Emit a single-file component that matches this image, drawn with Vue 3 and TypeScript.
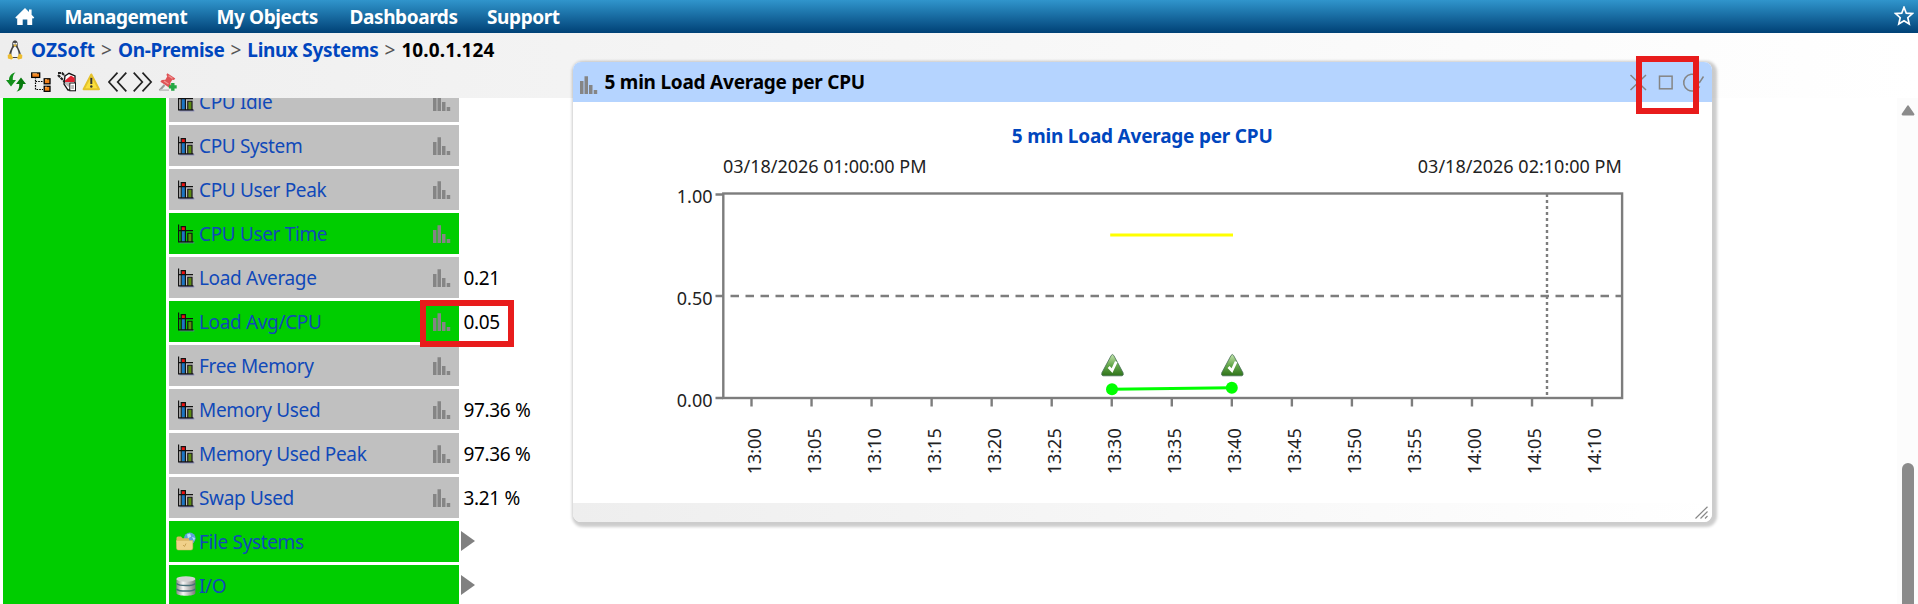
<script setup lang="ts">
interface Metric {
  label: string
  value?: string
  ok?: boolean
  kind: 'metric' | 'folder' | 'disk'
}

const menu: string[] = ['Management', 'My Objects', 'Dashboards', 'Support']
const crumbs: string[] = ['OZSoft', 'On-Premise', 'Linux Systems']

const rows: Metric[] = [
  { label: 'CPU Idle', kind: 'metric' },
  { label: 'CPU System', kind: 'metric' },
  { label: 'CPU User Peak', kind: 'metric' },
  { label: 'CPU User Time', kind: 'metric', ok: true },
  { label: 'Load Average', kind: 'metric', value: '0.21' },
  { label: 'Load Avg/CPU', kind: 'metric', value: '0.05', ok: true },
  { label: 'Free Memory', kind: 'metric' },
  { label: 'Memory Used', kind: 'metric', value: '97.36 %' },
  { label: 'Memory Used Peak', kind: 'metric', value: '97.36 %' },
  { label: 'Swap Used', kind: 'metric', value: '3.21 %' },
  { label: 'File Systems', kind: 'folder', ok: true },
  { label: 'I/O', kind: 'disk', ok: true },
]

const ticks = Array.from({ length: 15 }, (_, i) => {
  const minutes = 13 * 60 + i * 5
  return {
    x: 178.5 + i * 60.04,
    label: `${Math.floor(minutes / 60)}:${String(minutes % 60).padStart(2, '0')}`,
  }
})

const samples = [
  { x: 539, y: 287.2 },
  { x: 658.8, y: 285.7 },
]
</script>

<template>
  <div class="page">
    <nav class="menu">
      <svg class="home" width="20" height="18" viewBox="0 0 20 18">
        <path d="M10 0 L14 4.1 V1.6 H16.6 V6.7 L19.3 9.5 L18 10.8 L17.2 10 V17 H12.3 V11.5 H7.7 V17 H2.2 V10 L1.4 10.8 L.3 9.5 Z" fill="#fff" />
      </svg>
      <a v-for="item in menu" :key="item" class="menu-item">{{ item }}</a>
      <svg class="star" width="20" height="20" viewBox="0 0 20 20">
        <path d="M10 1.3 L12.3 7.2 L18.4 7.6 L13.8 11.7 L15.2 17.9 L10 14.8 L4.8 17.9 L6.2 11.7 L1.6 7.6 L7.7 7.2 Z" fill="none" stroke="#fff" stroke-width="1.7" />
      </svg>
    </nav>

    <header class="header">
      <div class="crumbs">
        <svg class="tux" width="16" height="20" viewBox="0 0 16 20">
          <path d="M8 .5 C5.4 .5 5.2 3 5.3 5.5 C5.3 7.5 2.2 11 2.3 15 L5 18 H11 L13.8 15 C13.8 11 10.7 8 10.7 5.5 C10.8 3 10.6 .5 8 .5Z" fill="#444" />
          <path d="M8 6 C6 7.5 3.8 12 4.4 17 H11.6 C12.2 12 10 7.5 8 6Z" fill="#f6f6f6" />
          <path d="M.7 15 L3.6 13.5 L6.2 18 L4.6 19.4 L.9 18.4Z M15.3 15 L12.4 13.5 L10 18 L11.4 19.4 L15.1 18.4Z M6.1 5 L8 4.2 L10 5 L8 6.7Z" fill="#edbd31" />
          <circle cx="7" cy="3.7" r=".9" fill="#fff" /><circle cx="9.2" cy="3.7" r=".9" fill="#fff" />
        </svg>
        <template v-for="crumb in crumbs" :key="crumb">
          <a class="crumb">{{ crumb }}</a><span class="sep">&gt;</span>
        </template>
        <span class="current">10.0.1.124</span>
      </div>
      <div class="tools">
        <svg width="20" height="20" viewBox="0 0 20 20">
          <path d="M9.5 .4 C6 1 3 3.5 3 8 H0 L5 14.4 L10 8 H6.8 C6.5 4.5 7.5 2 9.5 .4Z" fill="#12901a" />
          <path d="M10.5 19.6 C14 19 17 16.5 17 12 H20 L15 5.6 L10 12 H13.2 C13.5 15.5 12.5 18 10.5 19.6Z" fill="#077a0d" />
        </svg>
        <svg width="20" height="20" viewBox="0 0 20 20">
          <path d="M4.5 5 V17.5 H12 M4.5 9.5 H12" fill="none" stroke="#000" stroke-width="1.2" stroke-dasharray="1.6 1.1" />
          <g fill="#f0801a" stroke="#000" stroke-width="1.3"><rect x=".7" y="1" width="8" height="4.4" /><rect x="13.2" y="6.8" width="5.8" height="5" /><rect x="13.2" y="14.3" width="5.8" height="5" /></g>
          <path d="M1.5 1.8 H6 M14 7.8 H16 M14 15.2 H16" stroke="#ffb461" />
        </svg>
        <svg width="20" height="20" viewBox="0 0 20 20">
          <path d="M8 4 L12 1.3 L18 4 V18 H11 L7 12 Z" fill="#fff" stroke="#111" stroke-width="1.3" />
          <path d="M1 1 H5 L8 4 M1 3 L5 7 L10 12" fill="none" stroke="#222" stroke-width="2.2" stroke-dasharray="3 .8" />
          <path d="M8 8.5 L14 3.5 L17.6 6 V10 H8Z" fill="#e32031" />
          <path d="M8 10 H12 V15 L9 13Z" fill="#bbb" /><rect x="12.8" y="11" width="5.7" height="7.8" fill="#fff" stroke="#111" /><path d="M14.2 14 H17 M14.2 16 H17" stroke="#777" />
        </svg>
        <svg width="20" height="20" viewBox="0 0 20 20">
          <path d="M9.3 2.5 L17 17.2 H1.6 Z" fill="#fbe03d" stroke="#e5c22c" stroke-width="2" stroke-linejoin="round" />
          <path d="M9.3 5.8 V12" stroke="#333" stroke-width="2" /><circle cx="9.3" cy="14.5" r="1.2" fill="#333" />
        </svg>
        <svg width="20" height="20" viewBox="0 0 20 20"><path d="M9.5 .7 L.9 10 L9.5 19.3 M18.3 .7 L9.7 10 L18.3 19.3" fill="none" stroke="#222" stroke-width="1.7" /></svg>
        <svg width="20" height="20" viewBox="0 0 20 20"><path d="M.7 .7 L9.3 10 L.7 19.3 M9.5 .7 L18.1 10 L9.5 19.3" fill="none" stroke="#222" stroke-width="1.7" /></svg>
        <svg width="20" height="20" viewBox="0 0 20 20">
          <path d="M6.5 13 L1.5 18.5" stroke="#999" stroke-width="2" /><path d="M2.5 17.2 H11 V19 H1.5Z" fill="#c4c4c4" />
          <path d="M9.4 1.2 L17.3 6.4 L16 8 L14.3 7.8 L12.3 11 L13 14.6 L11 15.6 L2.4 9.8 L3.7 8 L7.4 7.8 L9.2 4.6 L8.4 2.8Z" fill="#df5356" />
          <path d="M10.5 3.8 L14.5 6.4 M6 9 L10.5 12" stroke="#f09593" stroke-width="1.3" />
          <path d="M14.8 11 V18.8 M10.9 14.9 H18.7" stroke="#24a744" stroke-width="3.4" />
        </svg>
      </div>
    </header>

    <main class="content">
      <div class="group"></div>
      <div class="rows">
        <div v-for="row in rows" :key="row.label" class="row">
          <div class="cell" :class="{ ok: row.ok }">
            <svg v-if="row.kind === 'metric'" class="row-icon" width="20" height="20" viewBox="0 0 20 20">
              <path d="M3.5 18.8 H18.3" stroke="#7074b5" stroke-width="1" />
              <rect x="5.6" y="3.6" width="3.8" height="14" fill="#1c75c4" />
              <rect x="5.6" y="3" width="3.8" height="3.4" fill="#f01010" />
              <rect x="12.2" y="9.6" width="3.6" height="8" fill="#5d8c10" />
              <path d="M2.6 .6 V17.8 H17.4 M2 6.6 H17 M5.2 17.6 V2.6 H9.4 V17.6 M11.8 17.6 V9.2 H16 V17.6" stroke="#111" stroke-width="1.15" fill="none" />
            </svg>
            <svg v-else-if="row.kind === 'folder'" class="row-icon" width="20" height="20" viewBox="0 0 20 20">
              <circle cx="13.8" cy="6.3" r="5.8" fill="#5da0d8" /><path d="M11 2.6 L14 1.5 L15.2 4.5 L12 6.5Z M16 5 L19 6 L18 9Z" fill="#b7dff7" />
              <path d="M.5 6 Q.5 4.5 2 4.5 H5 L6.5 6.2 H13 V10 H.5Z" fill="#dcb65e" />
              <path d="M.3 8.5 H16.8 V16 Q16.8 18 15 18 H2.3 Q.5 18 .5 16Z" fill="#f0d08a" stroke="#d4b063" stroke-width=".5" />
              <path d="M7 13 L8.5 14.5 L10 11.5" fill="none" stroke="#c9a254" />
            </svg>
            <svg v-else class="row-icon" width="20" height="20" viewBox="0 0 20 20">
              <defs><linearGradient id="steel"><stop offset="0" stop-color="#888" /><stop offset=".35" stop-color="#f8f8f8" /><stop offset="1" stop-color="#777" /></linearGradient></defs>
              <path d="M.4 3 V17 C.4 20.7 19.4 20.7 19.4 17 V3Z" fill="url(#steel)" />
              <ellipse cx="9.9" cy="3" rx="9.5" ry="2.7" fill="#d2d2d2" />
              <path d="M.4 7.4 C3 10.2 17 10.2 19.4 7.4 M.4 13 C3 15.8 17 15.8 19.4 13" fill="none" stroke="#477079" stroke-width="1.5" />
            </svg>
            <a class="label">{{ row.label }}</a>
            <svg v-if="row.kind === 'metric'" class="bars" width="18" height="18" viewBox="0 0 18 18"><path d="M0 5 h3.5 v13 h-3.5z M4.5 .3 h3.5 v17.7 h-3.5z M9 9 h3.5 v9 h-3.5z M13.7 14 h3.5 v4 h-3.5z" fill="#858585" /></svg>
          </div>
          <span v-if="row.value" class="value">{{ row.value }}</span>
          <svg v-else-if="row.kind !== 'metric'" class="expand" width="14" height="20" viewBox="0 0 14 20"><path d="M0 0 L14 10 L0 20Z" fill="#808080" /></svg>
        </div>
      </div>
      <div class="scrollbar">
        <svg width="14" height="11" viewBox="0 0 14 11"><path d="M7 1.5 L12.3 9.3 H1.7Z" fill="#8b8b8b" stroke="#8b8b8b" stroke-width="2.2" stroke-linejoin="round" /></svg>
        <div class="thumb"></div>
      </div>
    </main>

    <section class="dialog">
      <div class="dialog-head">
        <svg class="bars" width="18" height="18" viewBox="0 0 18 18"><path d="M0 5 h3.5 v13 h-3.5z M4.5 .3 h3.5 v17.7 h-3.5z M9 9 h3.5 v9 h-3.5z M13.7 14 h3.5 v4 h-3.5z" fill="#858585" /></svg>
        <span class="dialog-title">5 min Load Average per CPU</span>
        <svg class="controls" width="76" height="20" viewBox="0 0 76 20" fill="none" stroke="#858585" stroke-width="1.5">
          <path d="M1.5 2 L17 17 M17 2 L1.5 17" />
          <rect x="30.5" y="3.2" width="12.6" height="12.6" />
          <path d="M70.6 13.5 A8.4 8.4 0 1 1 68.5 3.2 M74.5 3.5 L70.6 9.5 L66.8 6.6" />
        </svg>
      </div>
      <svg class="chart" width="1139" height="401" viewBox="0 0 1139 401">
        <defs><linearGradient id="status" x1="0" y1="0" x2="0" y2="1"><stop offset="0" stop-color="#c5e3ad" /><stop offset=".5" stop-color="#66a94c" /><stop offset="1" stop-color="#2e7219" /></linearGradient></defs>
        <text class="chart-title" x="438.8" y="40.7" textLength="261">5 min Load Average per CPU</text>
        <g class="axis-text">
          <text x="150" y="71.3" textLength="203.5">03/18/2026 01:00:00 PM</text>
          <text x="1048.8" y="71.3" text-anchor="end" textLength="204">03/18/2026 02:10:00 PM</text>
          <text x="139.5" y="101.3" text-anchor="end">1.00</text>
          <text x="139.5" y="202.8" text-anchor="end">0.50</text>
          <text x="139.5" y="304.9" text-anchor="end">0.00</text>
          <text v-for="tick in ticks" :key="tick.label" :transform="`translate(${tick.x + 9} 372.3) rotate(-90)`">{{ tick.label }}</text>
        </g>
        <g class="axis">
          <rect x="150.3" y="91.5" width="898.8" height="204.5" />
          <path d="M142.5 92.5 H150 M142.5 296 H150" />
          <path v-for="tick in ticks" :key="tick.label" :d="`M${tick.x} 296 V304.5`" />
          <path d="M142.5 194 H1049" stroke-dasharray="8.5 6.5" />
          <path d="M974 92 V296" stroke-dasharray="3 3" />
        </g>
        <path d="M537.2 133 H660" stroke="#ffff00" stroke-width="3" />
        <path :d="`M${samples[0].x} ${samples[0].y} L${samples[1].x} ${samples[1].y}`" stroke="#00ff00" stroke-width="3" />
        <g v-for="sample in samples" :key="sample.x">
          <circle :cx="sample.x" :cy="sample.y" r="6" fill="#00ff00" />
          <g :transform="`translate(${sample.x + 0.5} 252)`">
            <path d="M-1.3 1.5 Q0 -.6 1.3 1.5 L10.6 18.8 Q11.4 21.4 9.6 21.8 H-9.6 Q-11.4 21.4 -10.6 18.8Z" fill="url(#status)" stroke="#456f56" stroke-width=".8" />
            <path d="M-3.8 13 L-.4 16.6 L3.8 7.6" fill="none" stroke="#fff" stroke-width="2.7" />
          </g>
        </g>
      </svg>
      <div class="dialog-foot">
        <svg width="14" height="14" viewBox="0 0 14 14" stroke="#888" stroke-width="1.2"><path d="M.5 12.5 L12.5 .7 M5.5 12.5 L12.5 5.5 M10 12.5 L12.5 10" /></svg>
      </div>
    </section>

    <div class="mark mark-value"></div>
    <div class="mark mark-window"></div>
  </div>
</template>

<style>
body { margin: 0; background: #fff; overflow: hidden; }
</style>

<style scoped>
.page { position: relative; width: 1918px; height: 604px; overflow: hidden; display: flex; flex-direction: column; font: 19px/26px "Noto Sans", "Open Sans", sans-serif; letter-spacing: -0.35px; }
.page svg { display: block; flex: none; }
.menu { flex: none; box-sizing: border-box; height: 33px; padding-left: 15px; display: grid; grid-template-columns: 49.5px 152px 133px 137.5px 1fr 24px; align-items: center; background: linear-gradient(#3095cc, #004176); color: #fff; font-weight: 700; letter-spacing: -0.4px; }
.home { align-self: start; margin-top: 8px; }
.menu-item { white-space: nowrap; padding-top: 1px; }
.star { align-self: start; margin-top: 6px; }
.header { flex: none; height: 65px; background: linear-gradient(90deg, #eee, #fff); }
.crumbs { display: flex; height: 34px; align-items: center; padding-left: 7px; font-weight: 700; white-space: nowrap; letter-spacing: -0.33px; }
.tux { margin-right: 8px; }
.crumb { color: #0046be; }
.crumb:first-of-type { letter-spacing: 0.05px; }
.sep { margin: 0 6px; color: #555; font-weight: 400; letter-spacing: 0; }
.current { color: #000; letter-spacing: 0.1px; }
.tools { display: flex; gap: 5.4px; padding: 5px 0 0 6px; }
.content { flex: none; height: 506px; display: flex; overflow: hidden; }
.group { width: 163px; margin: 0 3px; background: #00cd00; }
.rows { flex: 1; margin-top: -17px; display: flex; flex-direction: column; gap: 3px; }
.row { flex: none; height: 41px; display: flex; align-items: center; white-space: nowrap; }
.cell { box-sizing: border-box; width: 290px; height: 41px; padding: 0 8px 0 7px; display: flex; align-items: center; background: #c0c0c0; }
.cell.ok { background: #00cd00; }
.row-icon { margin-right: 3px; }
.label { flex: 1; color: #1049b9; }
.value { margin-left: 4.5px; color: #000; }
.expand { margin-left: 2px; margin-top: -1px; }
.scrollbar { width: 21px; background: #fcfcfc; display: flex; flex-direction: column; align-items: center; padding-top: 7px; box-sizing: border-box; }
.thumb { flex: 1; width: 12px; margin-top: 347px; border-radius: 6px 6px 0 0; background: #8b8b8b; }
.dialog { position: absolute; left: 573px; top: 62px; width: 1139px; height: 460px; border-radius: 8px; background: #fff; box-shadow: 2px 2px 3px 3px rgba(0, 0, 0, .2); overflow: hidden; display: flex; flex-direction: column; }
.dialog-head { flex: none; box-sizing: border-box; height: 40px; display: flex; align-items: center; padding: 0 7px; background: #b5d4ff; }
.dialog-head .bars { margin-top: 5px; }
.dialog-title { flex: 1; margin-left: 6.5px; font-weight: 700; letter-spacing: -0.23px; }
.controls { margin-top: 2px; }
.chart { letter-spacing: 0; }
.chart-title { font-weight: 700; fill: #0046be; }
.axis-text { font-size: 18px; fill: #222; }
.axis { fill: none; stroke: #7d7d7d; stroke-width: 2.4; }
.dialog-foot { flex: none; height: 19px; display: flex; justify-content: flex-end; padding: 3px 3px 0 0; box-sizing: border-box; background: linear-gradient(90deg, #eee, #fff); }
.mark { position: absolute; box-sizing: border-box; border: 6px solid #e81c1c; }
.mark-value { left: 420px; top: 300px; width: 94px; height: 47px; }
.mark-window { left: 1636px; top: 56px; width: 63px; height: 58px; }
</style>
